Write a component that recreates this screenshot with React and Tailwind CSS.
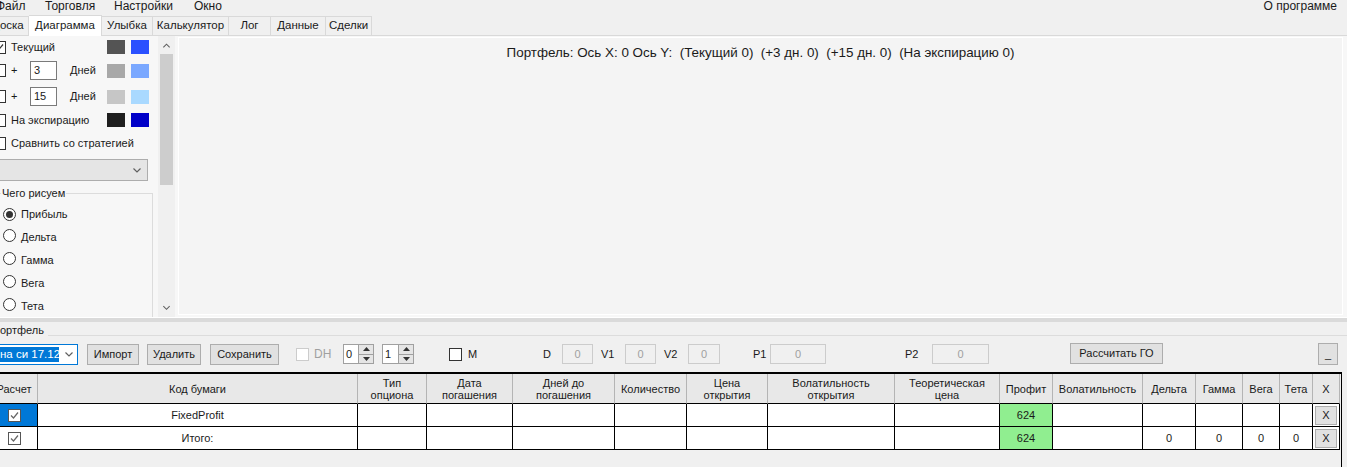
import React from "react";

const Check = ({ checked, disabled, className = "" }) => (
  <span
    className={`inline-flex h-[13px] w-[13px] shrink-0 items-center justify-center border bg-white ${
      disabled ? "border-[#cccccc]" : "border-[#333333]"
    } ${className}`}
  >
    {checked && (
      <svg width="9" height="9" viewBox="0 0 9 9">
        <path d="M1 4.5 L3.5 7 L8 1.5" fill="none" stroke="#333" strokeWidth="1.2" />
      </svg>
    )}
  </span>
);

const Radio = ({ checked }) => (
  <span className="inline-flex h-[13px] w-[13px] shrink-0 items-center justify-center rounded-full border border-[#333333] bg-white">
    {checked && <span className="h-[7px] w-[7px] rounded-full bg-[#333333]" />}
  </span>
);

const Chevron = ({ up, size = 9, color = "#606060" }) => (
  <svg width={size} height={size} viewBox="0 0 10 10">
    <path
      d={up ? "M1.5 7 L5 3.5 L8.5 7" : "M1.5 3.5 L5 7 L8.5 3.5"}
      fill="none"
      stroke={color}
      strokeWidth="1.2"
    />
  </svg>
);

const Swatches = ({ a, b }) => (
  <div className="flex gap-[6px]">
    <span className="h-[14px] w-[18px]" style={{ backgroundColor: a }} />
    <span className="h-[14px] w-[18px]" style={{ backgroundColor: b }} />
  </div>
);

const Spinner = ({ value, w }) => (
  <div className={`flex h-[20px] ${w} border border-[#a0a0a0] bg-white`}>
    <span className="flex-1 pl-[2px] leading-[18px]">{value}</span>
    <div className="flex w-[15px] flex-col border-l border-[#a0a0a0]">
      <span className="flex flex-1 items-center justify-center border-b border-[#a0a0a0] bg-[#e5e5e5]">
        <svg width="7" height="4" viewBox="0 0 7 4"><path d="M0 4 L3.5 0 L7 4Z" fill="#333" /></svg>
      </span>
      <span className="flex flex-1 items-center justify-center bg-[#e5e5e5]">
        <svg width="7" height="4" viewBox="0 0 7 4"><path d="M0 0 L3.5 4 L7 0Z" fill="#333" /></svg>
      </span>
    </div>
  </div>
);

const Disabled = ({ w }) => (
  <span className={`flex h-[20px] ${w} items-center justify-center border border-[#cccccc] bg-[#f0f0f0] text-[#a0a0a0]`}>
    0
  </span>
);

const Btn = ({ children, w, className = "" }) => (
  <button className={`flex h-[21px] ${w} items-center justify-center border border-[#adadad] bg-[#e1e1e1] ${className}`}>
    {children}
  </button>
);

const cols = [
  ["Расчет", 47],
  ["Код бумаги", 320],
  ["Тип\nопциона", 69],
  ["Дата\nпогашения", 86],
  ["Дней до\nпогашения", 102],
  ["Количество", 72],
  ["Цена\nоткрытия", 81],
  ["Волатильность\nоткрытия", 127],
  ["Теоретическая\nцена", 105],
  ["Профит", 53],
  ["Волатильность", 90],
  ["Дельта", 53],
  ["Гамма", 47],
  ["Вега", 37],
  ["Тета", 33],
  ["X", 27],
];

const rows = [
  { code: "FixedProfit", sel: true, greeks: ["", "", "", ""] },
  { code: "Итого:", sel: false, greeks: ["0", "0", "0", "0"] },
];

const tabs = [
  ["Улыбка", "w-[51px]"],
  ["Калькулятор", "w-[76px]"],
  ["Лог", "w-[42px]"],
  ["Данные", "w-[55px]"],
  ["Сделки", "w-[46px]"],
];

export default function App() {
  return (
    <div className="flex h-[467px] w-[1347px] flex-col overflow-hidden bg-[#f0f0f0] font-['Liberation_Sans',Arial,sans-serif] text-[11px] text-[#1a1a1a]">
      {/* menu */}
      <div className="flex h-[15px] shrink-0 items-start text-[12px] leading-[12px]">
        <span className="-ml-[4px] w-[49px]">Файл</span>
        <span className="w-[69px]">Торговля</span>
        <span className="w-[80px]">Настройки</span>
        <span>Окно</span>
        <span className="ml-auto mr-[10px]">О программе</span>
      </div>

      {/* tabs */}
      <div className="flex h-[21px] shrink-0 items-end border-b border-[#d9d9d9] text-[11.5px]">
        <div className="flex h-[19px] w-[29px] items-center overflow-hidden border-t border-r border-[#d9d9d9]">
          <span className="-ml-[8px] whitespace-nowrap">Доска</span>
        </div>
        <div className="-mb-px flex h-[21px] w-[73px] items-center justify-center border-t border-r border-[#d9d9d9] bg-white">
          Диаграмма
        </div>
        {tabs.map(([t, w]) => (
          <div key={t} className={`flex h-[19px] ${w} items-center justify-center border-t border-r border-[#d9d9d9]`}>
            {t}
          </div>
        ))}
      </div>

      {/* tab page */}
      <div className="flex h-[281px] shrink-0 overflow-hidden bg-[#f7f7f7]">
        <div className="w-[158px] shrink-0 overflow-hidden">
          <div className="mt-[3px] flex h-[16px] items-center">
            <Check checked className="-ml-[7px]" />
            <span className="ml-[5px] w-[96px]">Текущий</span>
            <Swatches a="#545454" b="#2a50ff" />
          </div>
          <div className="mt-[5px] flex h-[21px] items-center">
            <Check className="-ml-[7px]" />
            <span className="ml-[5px] w-[19px]">+</span>
            <span className="flex h-[19px] w-[27px] items-center border border-[#7a7a7a] bg-white pl-[3px]">3</span>
            <span className="ml-[13px] w-[37px]">Дней</span>
            <Swatches a="#a8a8a8" b="#7aa8ff" />
          </div>
          <div className="mt-[5px] flex h-[21px] items-center">
            <Check className="-ml-[7px]" />
            <span className="ml-[5px] w-[19px]">+</span>
            <span className="flex h-[19px] w-[27px] items-center border border-[#7a7a7a] bg-white pl-[3px]">15</span>
            <span className="ml-[13px] w-[37px]">Дней</span>
            <Swatches a="#c6c6c6" b="#a9d9ff" />
          </div>
          <div className="mt-[5px] flex h-[16px] items-center">
            <Check className="-ml-[7px]" />
            <span className="ml-[5px] w-[96px]">На экспирацию</span>
            <Swatches a="#1e1e1e" b="#0000c8" />
          </div>
          <div className="mt-[7px] flex h-[16px] items-center">
            <Check className="-ml-[7px]" />
            <span className="ml-[5px]">Сравнить со стратегией</span>
          </div>
          <div className="-ml-[2px] mt-[8px] flex h-[22px] w-[150px] items-center justify-end border border-[#adadad] bg-[#e5e5e5] pr-[5px]">
            <Chevron size={10} />
          </div>
          <fieldset className="-ml-[4px] mt-[5px] h-[200px] w-[157px] border border-[#dcdcdc] pl-[4px]">
            <legend className="px-[1px] leading-[14px]">Чего рисуем</legend>
            <div className="mt-[3px] flex flex-col">
              {["Прибыль", "Дельта", "Гамма", "Вега", "Тета"].map((r, i) => (
                <div key={r} className="flex h-[23px] items-center">
                  <span className="ml-[2px]">
                    <Radio checked={i === 0} />
                  </span>
                  <span className="ml-[5px]">{r}</span>
                </div>
              ))}
            </div>
          </fieldset>
        </div>

        {/* scrollbar */}
        <div className="flex w-[17px] shrink-0 flex-col items-center bg-[#f0f0f0]">
          <div className="flex h-[18px] items-center">
            <Chevron up />
          </div>
          <div className="h-[131px] w-[13px] bg-[#cdcdcd]" />
          <div className="flex-1" />
          <div className="flex h-[20px] items-center">
            <Chevron />
          </div>
        </div>

        {/* chart */}
        <div className="mb-[2px] ml-[3px] mr-[4px] mt-px flex-1 border border-white bg-[#f4f4f4] pt-[5px] text-center text-[13.4px]">
          Портфель: Ось X: 0 Ось Y:&nbsp; (Текущий 0)&nbsp; (+3 дн. 0)&nbsp; (+15 дн. 0)&nbsp; (На экспирацию 0)
        </div>
      </div>

      {/* splitter */}
      <div className="h-[5px] shrink-0 border-t border-white bg-[#dadada]" />

      {/* portfolio */}
      <div className="flex h-[14px] shrink-0 items-start">
        <span className="-ml-[8px] mt-px leading-[14px]">Портфель</span>
        <div className="ml-[4px] mt-[13px] h-px flex-1 bg-[#dcdcdc]" />
      </div>

      <div className="mt-[7px] flex h-[22px] shrink-0 items-center">
        <div className="-ml-[2px] flex h-[21px] w-[80px] items-center border border-[#0078d7] bg-white">
          <span className="w-[60px] whitespace-nowrap bg-[#0078d7] pl-px text-[11.5px] leading-[15px] text-white">на си 17.12</span>
          <span className="ml-[5px]">
            <Chevron size={10} />
          </span>
        </div>
        <Btn w="w-[52px]" className="ml-[9px]">Импорт</Btn>
        <Btn w="w-[54px]" className="ml-[8px]">Удалить</Btn>
        <Btn w="w-[69px]" className="ml-[9px]">Сохранить</Btn>
        <div className="ml-[17px] flex w-[47px] items-center">
          <Check disabled />
          <span className="ml-[5px] text-[12px] text-[#a0a0a0]">DH</span>
        </div>
        <Spinner value="0" w="w-[31px]" />
        <div className="ml-[8px]">
          <Spinner value="1" w="w-[32px]" />
        </div>
        <div className="ml-[35px] flex w-[94px] items-center">
          <Check />
          <span className="ml-[6px]">M</span>
        </div>
        <span className="w-[19px]">D</span>
        <Disabled w="w-[31px]" />
        <span className="ml-[8px] w-[24px]">V1</span>
        <Disabled w="w-[31px]" />
        <span className="ml-[8px] w-[24px]">V2</span>
        <Disabled w="w-[32px]" />
        <span className="ml-[33px] w-[17px]">P1</span>
        <Disabled w="w-[56px]" />
        <span className="ml-[79px] w-[27px]">P2</span>
        <Disabled w="w-[57px]" />
        <Btn w="w-[93px]" className="-mt-[2px] ml-[81px]">Рассчитать ГО</Btn>
        <Btn w="w-[20px]" className="ml-[155px] h-[22px]">_</Btn>
      </div>

      {/* grid */}
      <div className="mt-[7px] w-[1342px] flex-1 overflow-hidden border-t-2 border-r border-black bg-[#f0f0f0]">
        <table className="-ml-[9px] table-fixed border-separate border-spacing-0">
          <colgroup>
            {cols.map(([c, w]) => (
              <col key={c} style={{ width: w }} />
            ))}
          </colgroup>
          <thead>
            <tr>
              {cols.map(([c]) => (
                <th
                  key={c}
                  className="h-[30px] whitespace-pre border-r border-b border-r-[#b4b4b4] border-b-black bg-[#e8e8e8] p-0 text-center font-normal leading-[12px]"
                >
                  {c}
                </th>
              ))}
            </tr>
          </thead>
          <tbody>
            {rows.map((r) => (
              <tr key={r.code}>
                <td className={`h-[23px] border-r border-b border-black p-0 ${r.sel ? "bg-[#0078d7]" : "bg-white"}`}>
                  <div className="flex justify-center">
                    <span className="inline-flex h-[13px] w-[13px] items-center justify-center border border-[#555] bg-white">
                      <svg width="9" height="9" viewBox="0 0 9 9">
                        <path d="M1 4.5 L3.5 7 L8 1.5" fill="none" stroke="#666" strokeWidth="1.2" />
                      </svg>
                    </span>
                  </div>
                </td>
                <td className="border-r border-b border-black bg-white p-0 text-center">{r.code}</td>
                {Array.from({ length: 7 }).map((_, i) => (
                  <td key={i} className="border-r border-b border-black bg-white p-0" />
                ))}
                <td className="border-r border-b border-black bg-[#90ee90] p-0 text-center">624</td>
                <td className="border-r border-b border-black bg-white p-0" />
                {r.greeks.map((g, i) => (
                  <td key={i} className="border-r border-b border-black bg-white p-0 text-center">
                    {g}
                  </td>
                ))}
                <td className="border-r border-b border-black bg-white p-0">
                  <div className="mx-auto flex h-[19px] w-[22px] items-center justify-center border border-[#adadad] bg-[#e1e1e1]">
                    X
                  </div>
                </td>
              </tr>
            ))}
          </tbody>
        </table>
      </div>
    </div>
  );
}
